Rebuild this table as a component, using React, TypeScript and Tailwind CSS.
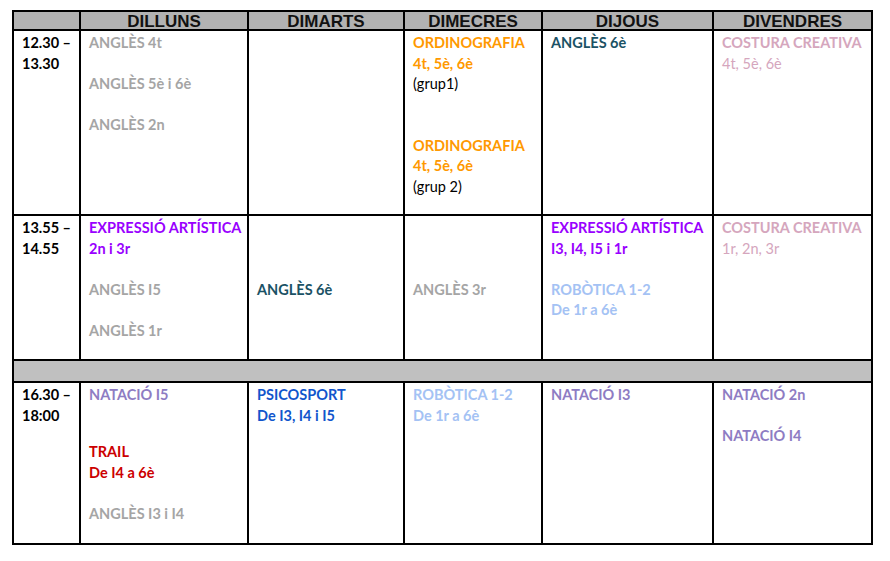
import React from 'react';

type Line = { t: string; c?: string; n?: boolean } | null;

const GRAY = 'text-[#a5a5a5]';
const ORANGE = 'text-[#ff9900]';
const TEAL = 'text-[#1b5265]';
const PINK = 'text-[#d5a6bd]';
const PURPLE = 'text-[#9900ff]';
const SKY = 'text-[#a4c2f4]';
const LAVENDER = 'text-[#8e7cc3]';
const BLUE = 'text-[#1155cc]';
const RED = 'text-[#cc0000]';

const days = ['DILLUNS', 'DIMARTS', 'DIMECRES', 'DIJOUS', 'DIVENDRES'];

const rows: { time: string[]; h: string; cells: Line[][] }[] = [
  {
    time: ['12.30 –', '13.30'],
    h: 'h-[183px]',
    cells: [
      [{ t: 'ANGLÈS 4t', c: GRAY }, null, { t: 'ANGLÈS 5è i 6è', c: GRAY }, null, { t: 'ANGLÈS 2n', c: GRAY }],
      [],
      [
        { t: 'ORDINOGRAFIA', c: ORANGE },
        { t: '4t, 5è, 6è', c: ORANGE },
        { t: '(grup1)', c: 'text-black', n: true },
        null,
        null,
        { t: 'ORDINOGRAFIA', c: ORANGE },
        { t: '4t, 5è, 6è', c: ORANGE },
        { t: '(grup 2)', c: 'text-black', n: true },
      ],
      [{ t: 'ANGLÈS 6è', c: TEAL }],
      [{ t: 'COSTURA CREATIVA', c: PINK }, { t: '4t, 5è, 6è', c: PINK, n: true }],
    ],
  },
  {
    time: ['13.55 –', '14.55'],
    h: 'h-[143px]',
    cells: [
      [
        { t: 'EXPRESSIÓ ARTÍSTICA', c: PURPLE },
        { t: '2n i 3r', c: PURPLE },
        null,
        { t: 'ANGLÈS I5', c: GRAY },
        null,
        { t: 'ANGLÈS 1r', c: GRAY },
      ],
      [null, null, null, { t: 'ANGLÈS 6è', c: TEAL }],
      [null, null, null, { t: 'ANGLÈS 3r', c: GRAY }],
      [
        { t: 'EXPRESSIÓ ARTÍSTICA', c: PURPLE },
        { t: 'I3, I4, I5 i 1r', c: PURPLE },
        null,
        { t: 'ROBÒTICA 1-2', c: SKY },
        { t: 'De 1r a 6è', c: SKY },
      ],
      [{ t: 'COSTURA CREATIVA', c: PINK }, { t: '1r, 2n, 3r', c: PINK, n: true }],
    ],
  },
];

function Cell({ lines, className = '' }: { lines: Line[]; className?: string }) {
  return (
    <div className={`bg-white pl-2 pt-[2px] ${className}`}>
      {lines.map((l, i) =>
        l ? (
          <div key={i} className={`h-[20.5px] leading-[20.5px] whitespace-nowrap ${l.n ? 'font-normal' : 'font-bold'} ${l.c}`}>
            {l.t}
          </div>
        ) : (
          <div key={i} className="h-[20.5px]" />
        )
      )}
    </div>
  );
}

function TimeCell({ time, className = '' }: { time: string[]; className?: string }) {
  return (
    <div className={`bg-white pl-2 pt-[2px] font-bold text-black ${className}`}>
      {time.map((t) => (
        <div key={t} className="h-[20.5px] leading-[20.5px] whitespace-nowrap">{t}</div>
      ))}
    </div>
  );
}

export default function App() {
  return (
    <div className="w-[890px] h-[561px] bg-white pt-[10px] pl-[12px]">
      <div
        className="grid w-[861px] gap-[2px] bg-black p-[2px] text-[14.5px] grid-cols-[65px_166px_154px_136px_169px_157px] font-['Lato','Open_Sans',sans-serif]"
      >
        {/* header */}
        <div className="h-[17px] bg-[#b2b2b2]" />
        {days.map((d) => (
          <div
            key={d}
            className="h-[17px] bg-[#b2b2b2] text-center font-['Liberation_Sans',Arial,sans-serif] text-[17px] font-bold leading-[19px] text-[#111]"
          >
            {d}
          </div>
        ))}

        {rows.map((r, ri) => (
          <React.Fragment key={ri}>
            <TimeCell time={r.time} className={r.h} />
            {r.cells.map((c, ci) => (
              <Cell key={ci} lines={c} className={r.h} />
            ))}
          </React.Fragment>
        ))}

        {/* break row */}
        <div className="col-span-6 h-[20px] bg-[#c0c0c0]" />

        {/* afternoon row */}
        <TimeCell time={['16.30 –', '18:00']} className="h-[160px]" />
        <div className="h-[160px] bg-white pl-2 pt-[2px] font-bold">
          <div className={`h-[20.5px] leading-[20.5px] ${LAVENDER}`}>NATACIÓ I5</div>
          <div className="h-[36.5px]" />
          <div className={`h-[20.5px] leading-[20.5px] ${RED}`}>TRAIL</div>
          <div className={`h-[20.5px] leading-[20.5px] ${RED}`}>De I4 a 6è</div>
          <div className="h-[20.5px]" />
          <div className={`h-[20.5px] leading-[20.5px] ${GRAY}`}>ANGLÈS I3 i I4</div>
        </div>
        <Cell lines={[{ t: 'PSICOSPORT', c: BLUE }, { t: 'De I3, I4 i I5', c: BLUE }]} />
        <Cell lines={[{ t: 'ROBÒTICA 1-2', c: SKY }, { t: 'De 1r a 6è', c: SKY }]} />
        <Cell lines={[{ t: 'NATACIÓ I3', c: LAVENDER }]} />
        <Cell lines={[{ t: 'NATACIÓ 2n', c: LAVENDER }, null, { t: 'NATACIÓ I4', c: LAVENDER }]} />
      </div>
    </div>
  );
}
